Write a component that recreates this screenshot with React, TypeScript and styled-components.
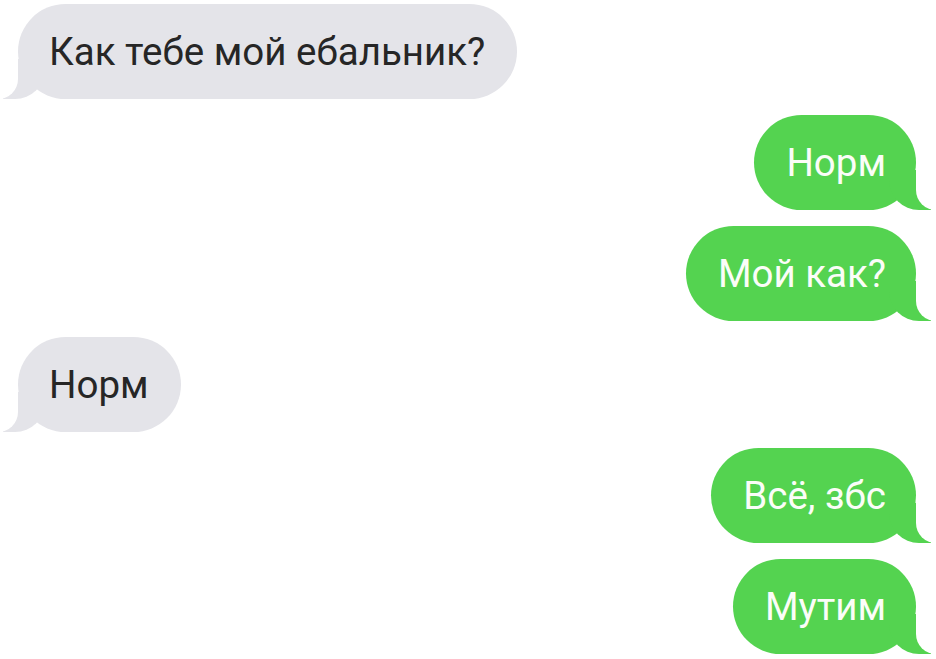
import React from "react";
import styled, { createGlobalStyle, css } from "styled-components";

const GlobalStyle = createGlobalStyle`
  html, body {
    margin: 0;
    padding: 0;
    background: #ffffff;
  }
  body {
    font-family: Roboto, "Noto Sans", "Liberation Sans", sans-serif;
  }
`;

const Thread = styled.div`
  display: flex;
  flex-direction: column;
  gap: 16px;
  padding: 4px 20px 0 18px;
  width: 936px;
  height: 659px;
  box-sizing: border-box;
  overflow: hidden;
`;

const Row = styled.div<{ $mine?: boolean }>`
  display: flex;
  justify-content: ${(p) => (p.$mine ? "flex-end" : "flex-start")};
`;

const Bubble = styled.div<{ $mine?: boolean }>`
  position: relative;
  display: inline-flex;
  align-items: center;
  height: 95px;
  padding: ${(p) => (p.$mine ? "0 30px 0 32px" : "0 32px 0 31px")};
  border-radius: 48px;
  font-size: 38.5px;
  background: ${(p) => (p.$mine ? "#54d350" : "#e4e4e9")};
  color: ${(p) => (p.$mine ? "#fbfdf8" : "#262626")};

  &::before,
  &::after {
    content: "";
    position: absolute;
    bottom: 0;
    height: 40px;
  }

  ${(p) =>
    p.$mine
      ? css`
          &::before {
            right: -15px;
            width: 42px;
            background: #54d350;
            border-bottom-left-radius: 30px;
          }
          &::after {
            right: -22px;
            width: 22px;
            background: #ffffff;
            border-bottom-left-radius: 20px;
          }
        `
      : css`
          &::before {
            left: -15px;
            width: 42px;
            background: #e4e4e9;
            border-bottom-right-radius: 30px;
          }
          &::after {
            left: -22px;
            width: 22px;
            background: #ffffff;
            border-bottom-right-radius: 20px;
          }
        `}
`;

const Text = styled.span`
  position: relative;
  z-index: 1;
  white-space: nowrap;
`;

const messages = [
  { mine: false, text: "Как тебе мой ебальник?" },
  { mine: true, text: "Норм" },
  { mine: true, text: "Мой как?" },
  { mine: false, text: "Норм" },
  { mine: true, text: "Всё, збс" },
  { mine: true, text: "Мутим" },
];

export default function App() {
  return (
    <>
      <GlobalStyle />
      <Thread>
        {messages.map((m, i) => (
          <Row key={i} $mine={m.mine}>
            <Bubble $mine={m.mine}>
              <Text>{m.text}</Text>
            </Bubble>
          </Row>
        ))}
      </Thread>
    </>
  );
}
